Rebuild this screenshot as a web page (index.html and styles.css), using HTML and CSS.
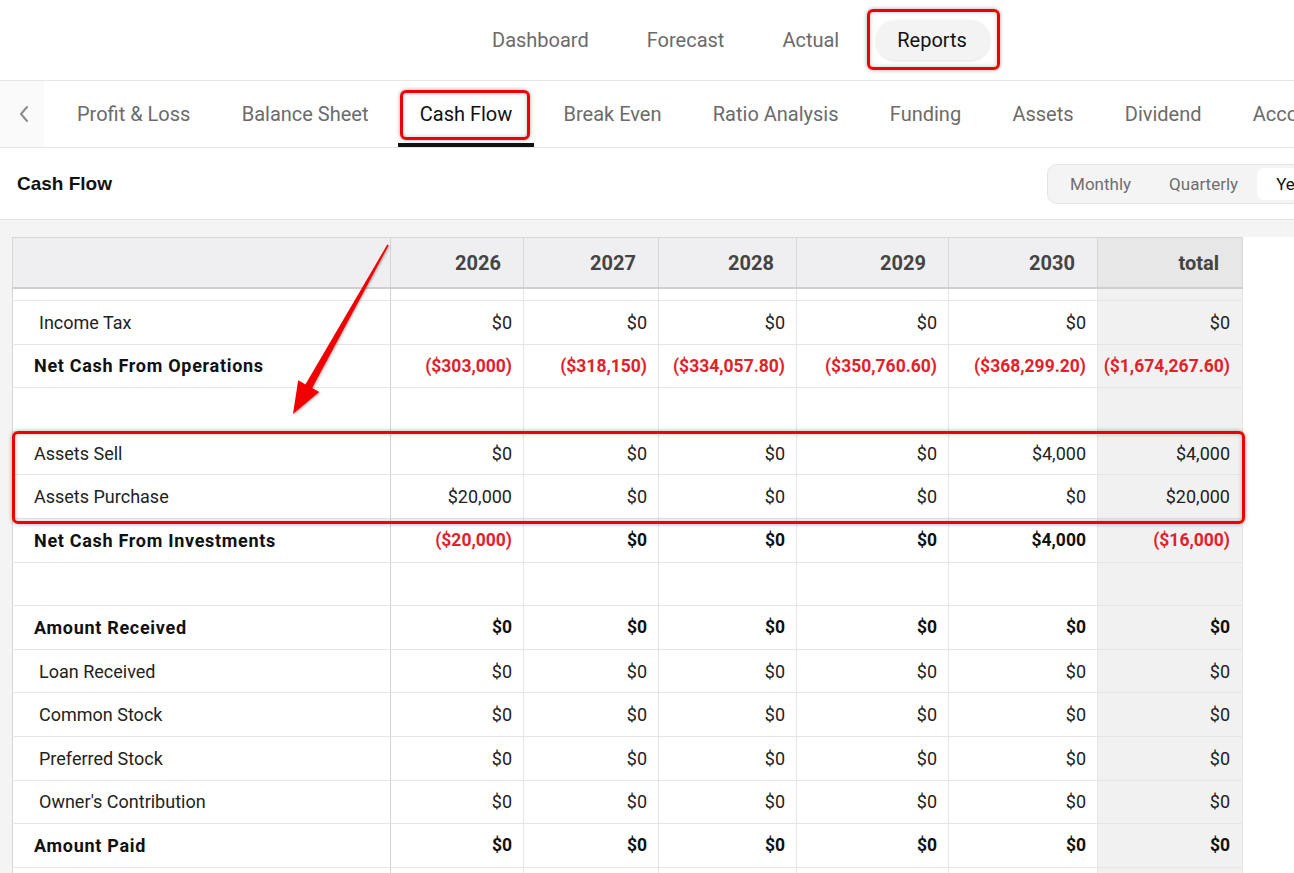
FILE: index.html
```html
<!DOCTYPE html>
<html lang="en">
<head>
    <meta charset="UTF-8">
    <meta name="viewport" content="width=device-width, initial-scale=1.0">
    <title>Cash Flow Report</title>
    <link rel="stylesheet" href="styles.css">
</head>
<body>

<div class="topNav">
    <div class="navItem">Dashboard</div>
    <div class="navItem">Forecast</div>
    <div class="navItem">Actual</div>
    <div class="navItem active">Reports</div>
</div>

<div class="reportTabs">
    <div class="scrollBack">
        <svg width="12" height="18" viewBox="0 0 12 18"><path d="M9 2 L3 9 L9 16" fill="none" stroke="#8a8a8a" stroke-width="2" stroke-linecap="round" stroke-linejoin="round"/></svg>
    </div>
    <div class="tab">Profit &amp; Loss</div>
    <div class="tab">Balance Sheet</div>
    <div class="tab active">Cash Flow</div>
    <div class="tab">Break Even</div>
    <div class="tab">Ratio Analysis</div>
    <div class="tab">Funding</div>
    <div class="tab">Assets</div>
    <div class="tab">Dividend</div>
    <div class="tab">Accounts</div>
</div>

<div class="titleBar">
    <div class="pageTitle">Cash Flow</div>
    <div class="periodSwitch">
        <div class="period">Monthly</div>
        <div class="period">Quarterly</div>
        <div class="period selected">Yearly</div>
    </div>
</div>

<div class="sheetArea">
    <div class="sheet">
        <table class="cashTable">
            <colgroup>
                <col style="width:378px">
                <col style="width:133px">
                <col style="width:135px">
                <col style="width:138px">
                <col style="width:152px">
                <col style="width:149px">
                <col style="width:145px">
            </colgroup>
            <thead>
                <tr>
                    <th></th>
                    <th>2026</th>
                    <th>2027</th>
                    <th>2028</th>
                    <th>2029</th>
                    <th>2030</th>
                    <th class="totalCol">total</th>
                </tr>
            </thead>
            <tbody>
                <tr class="stub"><td></td><td></td><td></td><td></td><td></td><td></td><td class="totalCol"></td></tr>
                <tr>
                    <td class="sub">Income Tax</td>
                    <td>$0</td><td>$0</td><td>$0</td><td>$0</td><td>$0</td><td class="totalCol">$0</td>
                </tr>
                <tr class="sum">
                    <td>Net Cash From Operations</td>
                    <td class="neg">($303,000)</td><td class="neg">($318,150)</td><td class="neg">($334,057.80)</td><td class="neg">($350,760.60)</td><td class="neg">($368,299.20)</td><td class="totalCol neg">($1,674,267.60)</td>
                </tr>
                <tr><td></td><td></td><td></td><td></td><td></td><td></td><td class="totalCol"></td></tr>
                <tr>
                    <td>Assets Sell</td>
                    <td>$0</td><td>$0</td><td>$0</td><td>$0</td><td>$4,000</td><td class="totalCol">$4,000</td>
                </tr>
                <tr>
                    <td>Assets Purchase</td>
                    <td>$20,000</td><td>$0</td><td>$0</td><td>$0</td><td>$0</td><td class="totalCol">$20,000</td>
                </tr>
                <tr class="sum">
                    <td>Net Cash From Investments</td>
                    <td class="neg">($20,000)</td><td>$0</td><td>$0</td><td>$0</td><td>$4,000</td><td class="totalCol neg">($16,000)</td>
                </tr>
                <tr><td></td><td></td><td></td><td></td><td></td><td></td><td class="totalCol"></td></tr>
                <tr class="sum">
                    <td>Amount Received</td>
                    <td>$0</td><td>$0</td><td>$0</td><td>$0</td><td>$0</td><td class="totalCol">$0</td>
                </tr>
                <tr>
                    <td class="sub">Loan Received</td>
                    <td>$0</td><td>$0</td><td>$0</td><td>$0</td><td>$0</td><td class="totalCol">$0</td>
                </tr>
                <tr>
                    <td class="sub">Common Stock</td>
                    <td>$0</td><td>$0</td><td>$0</td><td>$0</td><td>$0</td><td class="totalCol">$0</td>
                </tr>
                <tr>
                    <td class="sub">Preferred Stock</td>
                    <td>$0</td><td>$0</td><td>$0</td><td>$0</td><td>$0</td><td class="totalCol">$0</td>
                </tr>
                <tr>
                    <td class="sub">Owner's Contribution</td>
                    <td>$0</td><td>$0</td><td>$0</td><td>$0</td><td>$0</td><td class="totalCol">$0</td>
                </tr>
                <tr class="sum">
                    <td>Amount Paid</td>
                    <td>$0</td><td>$0</td><td>$0</td><td>$0</td><td>$0</td><td class="totalCol">$0</td>
                </tr>
                <tr><td></td><td></td><td></td><td></td><td></td><td></td><td class="totalCol"></td></tr>
            </tbody>
        </table>
    </div>
</div>

<!-- annotation marks drawn over the screenshot -->
<div class="notes">
    <div class="mark markReports"></div>
    <div class="mark markTab"></div>
    <div class="mark markRows"></div>
    <svg class="arrow" width="1294" height="873" viewBox="0 0 1294 873">
        <polygon points="387.3,244.6 305.4,384.6 298.2,380.2 293,414 319.2,392 312.2,388 388.7,245.4" fill="#f00000"/>
    </svg>
</div>

</body>
</html>
```

FILE: styles.css
```css
/* Basic page styling */
body {
    font-family: Roboto, "Liberation Sans", Arial, sans-serif;
    background: #fff;
    color: #222;
    margin: 0;
    padding: 0;
    overflow: hidden;
}

/* top navigation */
.topNav {
    display: flex;
    align-items: center;
    gap: 16px;
    height: 80px;
    padding-left: 471px;
    border-bottom: 1px solid #e6e6e6;
}

.navItem {
    padding: 0 21px;
    height: 40px;
    line-height: 40px;
    font-size: 20px;
    color: #6b6b6b;
    border-radius: 20px;
    white-space: nowrap;
}

.navItem.active {
    padding: 0 23px 0 21px;
    color: #111;
    background-color: #f3f3f3;
    box-shadow: 0 1px 3px rgba(0,0,0,0.12);
}

/* report tabs */
.reportTabs {
    display: flex;
    align-items: stretch;
    height: 66px;
    border-bottom: 1px solid #e6e6e6;
    white-space: nowrap;
    overflow: hidden;
}

.scrollBack {
    width: 44px;
    flex-shrink: 0;
    display: flex;
    align-items: center;
    justify-content: center;
    padding-left: 4px;
    box-sizing: border-box;
    background-color: #fafafa;
    margin-right: 11px;
}

.tab {
    display: flex;
    align-items: center;
    padding: 4px 22px 0;
    margin-right: 7.25px;
    font-size: 20px;
    color: #6b6b6b;
    border-bottom: 4px solid transparent;
    flex-shrink: 0;
}

.tab.active {
    color: #111;
    border-bottom-color: #111;
}

/* title row */
.titleBar {
    display: flex;
    justify-content: space-between;
    align-items: center;
    height: 71px;
    border-bottom: 1px solid #e6e6e6;
    padding-left: 17px;
    overflow: hidden;
}

.pageTitle {
    font-family: "Liberation Sans", Arial, sans-serif;
    font-weight: bold;
    font-size: 19px;
    color: #111;
}

.periodSwitch {
    display: flex;
    align-items: center;
    height: 38px;
    padding: 0 3px;
    margin-right: -51px;
    background-color: #f4f4f4;
    border: 1px solid #e4e4e4;
    border-radius: 10px;
    flex-shrink: 0;
}

.period {
    padding: 0 19px;
    height: 32px;
    line-height: 32px;
    font-size: 17px;
    color: #6e6e6e;
}

.period.selected {
    background-color: #fff;
    color: #111;
    border-radius: 7px;
}

/* table area */
.sheetArea {
    background-color: #f4f4f4;
    padding: 17px 0 0 12px;
    height: 700px;
}

.sheet {
    background-color: #fff;
    height: 100%;
}

.cashTable {
    border-collapse: collapse;
    table-layout: fixed;
    width: 1230px;
    font-size: 18px;
}

.cashTable th {
    height: 49px;
    background-color: #efeff1;
    color: #444;
    font-size: 20px;
    font-weight: bold;
    text-align: right;
    padding: 0 22px 0 0;
    border: 1px solid #d6d6d6;
    border-bottom: 2px solid #cfcfcf;
}

.cashTable th.totalCol {
    background-color: #e7e7e8;
    padding-right: 23px;
}

.cashTable td {
    height: 42.6px;
    padding: 0 11px 0 0;
    text-align: right;
    color: #222;
    border: 1px solid #e5e5e5;
    white-space: nowrap;
}

.cashTable td:first-child {
    text-align: left;
    padding-left: 21px;
    border-left-color: #d6d6d6;
    border-right-color: #d2d2d2;
}

.cashTable td.sub {
    padding-left: 26px;
}

.cashTable tr.stub td {
    height: 11px;
}

.cashTable td.totalCol {
    background-color: #f1f1f1;
    padding-right: 12px;
}

.cashTable tr.sum td {
    font-weight: bold;
    color: #111;
    font-size: 17.5px;
}

.cashTable tr.sum td:first-child {
    font-size: 18px;
    letter-spacing: 0.7px;
}

.cashTable td.neg,
.cashTable tr.sum td.neg {
    color: #e0222b;
}

/* annotation layer */
.notes {
    position: absolute;
    top: 0;
    left: 0;
    width: 1294px;
    height: 873px;
    pointer-events: none;
}

.mark {
    position: absolute;
    border: 3px solid #f00000;
    border-radius: 6px;
    box-shadow: 0 0 4px rgba(0,0,0,0.35), inset 0 0 4px rgba(0,0,0,0.25);
    box-sizing: border-box;
}

.markReports {
    left: 867px;
    top: 9px;
    width: 133px;
    height: 61px;
}

.markTab {
    left: 400px;
    top: 90px;
    width: 130px;
    height: 50px;
}

.markRows {
    left: 12px;
    top: 431px;
    width: 1233px;
    height: 93px;
}

.arrow {
    position: absolute;
    top: 0;
    left: 0;
    filter: drop-shadow(1px 1px 1px rgba(0,0,0,0.3));
}
```
